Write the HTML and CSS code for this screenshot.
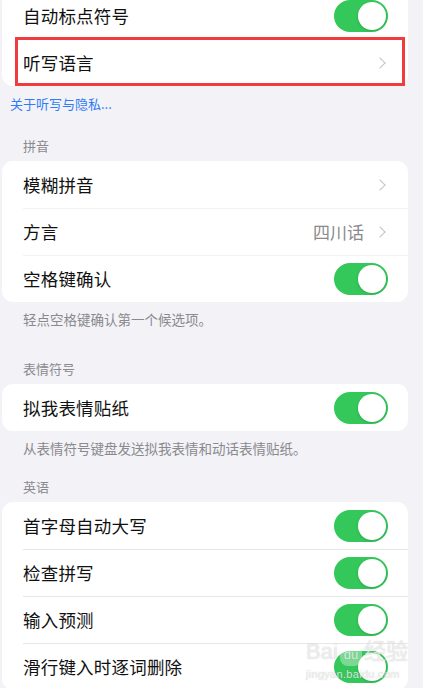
FILE: index.html
```html
<!DOCTYPE HTML>
<html>
<head>
<meta charset="utf-8">
<title>键盘</title>
<link rel="stylesheet" href="styles.css">
</head>

<body>
<div class="page">
    <!-- 听写 -->
    <div class="card card-top">
        <div class="row">
            <span class="label">自动标点符号</span>
            <span class="switch"></span>
        </div>
        <div class="row row-marked">
            <span class="label">听写语言</span>
            <span class="chev"></span>
        </div>
    </div>
    <a class="link" href="javascript:;">关于听写与隐私...</a>

    <!-- 拼音 -->
    <div class="head head-py">拼音</div>
    <div class="card card-plain">
        <div class="row">
            <span class="label">模糊拼音</span>
            <span class="chev"></span>
        </div>
        <div class="row">
            <span class="label">方言</span>
            <span class="value">四川话</span>
            <span class="chev"></span>
        </div>
        <div class="row">
            <span class="label">空格键确认</span>
            <span class="switch"></span>
        </div>
    </div>
    <div class="foot">轻点空格键确认第一个候选项。</div>

    <!-- 表情符号 -->
    <div class="head head-emoji">表情符号</div>
    <div class="card">
        <div class="row">
            <span class="label">拟我表情贴纸</span>
            <span class="switch"></span>
        </div>
    </div>
    <div class="foot">从表情符号键盘发送拟我表情和动话表情贴纸。</div>

    <!-- 英语 -->
    <div class="head head-en">英语</div>
    <div class="card">
        <div class="row">
            <span class="label">首字母自动大写</span>
            <span class="switch"></span>
        </div>
        <div class="row">
            <span class="label">检查拼写</span>
            <span class="switch"></span>
        </div>
        <div class="row">
            <span class="label">输入预测</span>
            <span class="switch"></span>
        </div>
        <div class="row">
            <span class="label">滑行键入时逐词删除</span>
            <span class="switch"></span>
        </div>
    </div>
</div>

<div class="mark">
    <div class="mark-logo">Bai<span class="mark-du">du</span>经验</div>
    <div class="mark-url">jingyan.baidu.com</div>
</div>
</body>
</html>
```

FILE: styles.css
```css
* {margin:0; padding:0; box-sizing:border-box;}
body {width:423px; height:688px; overflow:hidden; background:#f2f2f7; font-family:"Noto Sans CJK SC", "Noto Sans", sans-serif; color:#111; position:relative;}

.page {padding:0 15px 0 2px; margin-top:-8px;}

/* 白色圆角卡片，行与行之间一条细线，线从文字左边开始 */
.card {background:#fff; border-radius:11px;}
.row {height:47px; display:flex; align-items:center; padding:0 20px 0 21px; position:relative;}
.row + .row::before {content:""; position:absolute; left:21px; right:0; top:0; border-top:1px solid #e6e6eb;}
.card-plain .row + .row::before {border-top-color:#f3f3f6;}
.label {flex:1; font-size:17.5px; letter-spacing:0.2px;}
.value {font-size:17px; color:#8a8a8e; margin-right:12px;}

/* 截图上的红框标注 */
.row-marked::after {content:""; position:absolute; left:13px; right:3px; top:-2px; bottom:0; border:3px solid #f03c3c;}
.row-marked::before {display:none;}

.chev {width:8px; height:8px; border-top:1.8px solid #c4c4c8; border-right:1.8px solid #c4c4c8; transform:rotate(45deg); margin-right:4px;}

.switch {width:54px; height:32px; border-radius:16px; background:#34c759; position:relative;}
.switch::after {content:""; position:absolute; right:2px; top:2px; width:28px; height:28px; border-radius:50%; background:#fff; box-shadow:0 1px 3px rgba(0,0,0,0.15);}

.link {display:block; margin:9px 0 0 8px; font-size:13px; line-height:18px; color:#2f7cf6; text-decoration:none;}

.head {font-size:13px; line-height:18px; color:#8a8a8e; padding-left:21px; margin-bottom:6px;}
.head-py {margin-top:24px;}
.head-emoji {margin-top:32px;}
.head-en {margin-top:21px;}

.foot {font-size:13.5px; line-height:18px; color:#8a8a8e; padding-left:21px; margin-top:8px;}

/* 百度经验水印 */
.mark {position:absolute; left:306px; top:640px; color:rgba(255,255,255,0.7); text-shadow:0 0 1px rgba(140,140,140,0.55);}
.mark-logo {font-family:"Liberation Sans", "Noto Sans CJK SC", sans-serif; font-size:22px; line-height:24px;}
.mark-du {display:inline-block; font-size:13px; line-height:16px; padding:3px 4px; margin:0 2px; border-radius:8px; background:rgba(255,255,255,0.35);}
.mark-url {font-family:"Liberation Sans", sans-serif; font-size:11px; line-height:14px; margin-top:1px; letter-spacing:0.3px;}
```
